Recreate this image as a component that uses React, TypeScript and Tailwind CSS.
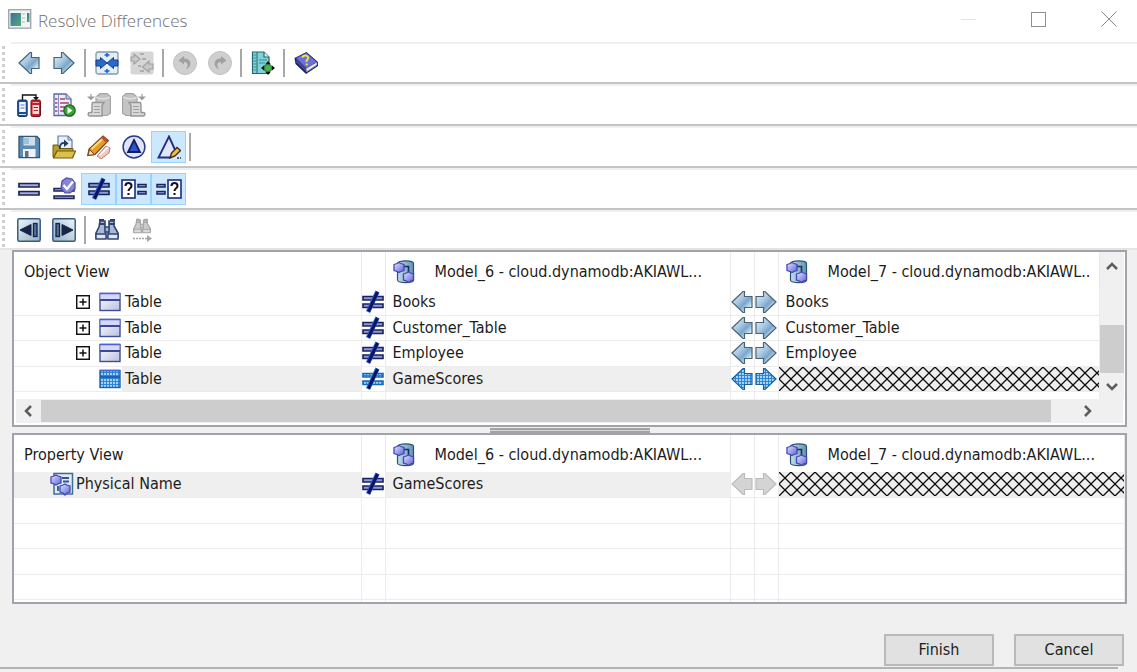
import React, { type ReactNode } from "react";

function Defs() {
  return (
    <svg className="absolute h-0 w-0" aria-hidden="true">
      <defs>
        <linearGradient id="arrow" x1="0" y1="0" x2="1" y2="1">
          <stop offset="0" stopColor="#e6f2fb" />
          <stop offset="0.4" stopColor="#a9c8e2" />
          <stop offset="0.6" stopColor="#7ba6cc" />
          <stop offset="0.8" stopColor="#c3e6f2" />
          <stop offset="1" stopColor="#e2f8fb" />
        </linearGradient>
        <linearGradient id="card" x1="0" y1="0" x2="1" y2="1">
          <stop offset="0" stopColor="#ffffff" />
          <stop offset="1" stopColor="#b9bfde" />
        </linearGradient>
        <linearGradient id="steel" x1="0" y1="0" x2="1" y2="1">
          <stop offset="0" stopColor="#eef6fa" />
          <stop offset="1" stopColor="#8fb0c6" />
        </linearGradient>
        <linearGradient id="cyl" x1="0" y1="0" x2="1" y2="0">
          <stop offset="0" stopColor="#c3dfec" />
          <stop offset="1" stopColor="#5d93b5" />
        </linearGradient>
        <linearGradient id="cube" x1="0" y1="0" x2="1" y2="1">
          <stop offset="0" stopColor="#e3e5ff" />
          <stop offset="1" stopColor="#5c60d6" />
        </linearGradient>
        <linearGradient id="app" x1="0" y1="0" x2="1" y2="1">
          <stop offset="0" stopColor="#3a6ea0" />
          <stop offset="1" stopColor="#4fae74" />
        </linearGradient>
        <pattern id="stipple" width="3" height="3" patternUnits="userSpaceOnUse">
          <rect width="3" height="3" fill="#2b86d6" />
          <rect width="2" height="2" fill="#a9d3f3" />
        </pattern>
        <pattern id="hatch" width="12" height="12" patternUnits="userSpaceOnUse">
          <path d="M-1 -1L13 13M13 -1L-1 13" stroke="#0c0c0c" strokeWidth="1.3" />
        </pattern>
      </defs>
    </svg>
  );
}

function Svg({ children }: { children: ReactNode }) {
  return (
    <svg viewBox="0 0 24 24" className="block h-6 w-6 shrink-0" fill="none" aria-hidden="true">
      {children}
    </svg>
  );
}

type Tone = "normal" | "selected" | "disabled";
const arrowFill = { normal: "url(#arrow)", selected: "url(#stipple)", disabled: "#d4d4d4" };
const arrowLine = { normal: "#4a6272", selected: "#1c5f9e", disabled: "#bcbcbc" };

function LeftArrow({ tone = "normal" }: { tone?: Tone }) {
  return (
    <Svg>
      <path d="M2 12L13 1.500H14.500V6.500H22V17.500H14.500V22.500H13Z" fill={arrowFill[tone]} stroke={arrowLine[tone]} strokeWidth="1.200" />
    </Svg>
  );
}

function RightArrow({ tone = "normal" }: { tone?: Tone }) {
  return (
    <Svg>
      <path d="M22 12L11 1.500H9.500V6.500H2V17.500H9.500V22.500H11Z" fill={arrowFill[tone]} stroke={arrowLine[tone]} strokeWidth="1.200" />
    </Svg>
  );
}

function NotEqual({ selected = false }: { selected?: boolean }) {
  const bar = selected ? "url(#stipple)" : "#8f9bd0";
  return (
    <Svg>
      <path d="M2 6.500H22V10H2ZM2 14H22V17.500H2Z" fill={bar} stroke={selected ? "#1769b8" : "#1a2163"} strokeWidth="1.600" />
      <path d="M16.500 1.500L7 22" stroke={selected ? "#1a7ad6" : "#2c62d8"} strokeWidth="4.500" />
      <path d="M16.500 2L7.500 21.500" stroke="#0d1461" strokeWidth="3" />
    </Svg>
  );
}

function Merge() {
  return (
    <Svg>
      <rect x="1" y="1" width="22" height="22" rx="2" fill="#e2edf4" stroke="#7e9ab0" strokeWidth="1.300" />
      <path d="M12 2V6M12 18V22M9.500 4H14.500M9.500 20H14.500" stroke="#2159e6" strokeWidth="1.600" />
      <path d="M1 9H5.500V6.500L12 12L5.500 17.500V15H1ZM23 9H18.500V6.500L12 12L18.500 17.500V15H23Z" fill="#2869c9" stroke="#173e8c" />
    </Svg>
  );
}

function MergeOff() {
  return (
    <Svg>
      <rect x="0.500" y="0.500" width="23" height="23" rx="2" fill="#d6d6d6" />
      <path d="M1 6H4V3L10 8L4 13V10H1ZM23 13H19V10L12.500 16L19 21V18H23Z" fill="#c9c9c9" stroke="#a2a2a2" strokeWidth="1.200" />
      <path d="M10 3H14M12 8H16M8 15H11M10 20H14" stroke="#a2a2a2" strokeWidth="1.400" />
    </Svg>
  );
}

function Undo() {
  return (
    <Svg>
      <circle cx="12" cy="12" r="11.500" fill="#cfcfcf" stroke="#c2c2c2" />
      <path d="M11 5L5.500 9.500L11 13.500V11C15 11 16 14.500 12.500 18.500C19.500 16 19 7.500 11 7.500Z" fill="#a0a0a0" />
    </Svg>
  );
}

function Redo() {
  return (
    <Svg>
      <circle cx="12" cy="12" r="11.500" fill="#cfcfcf" stroke="#c2c2c2" />
      <path d="M13 5L18.500 9.500L13 13.500V11C9 11 8 14.500 11.500 18.500C4.500 16 5 7.500 13 7.500Z" fill="#a0a0a0" />
    </Svg>
  );
}

function DocMove() {
  return (
    <Svg>
      <path d="M1.500 1H13L18 6V22.500H1.500Z" fill="#7fd3d6" stroke="#27666d" strokeWidth="1.200" />
      <path d="M13 1V6H18" fill="#d8f5f5" stroke="#27666d" strokeWidth="1.200" />
      <path d="M6 1V22" stroke="#27666d" />
      <path d="M2.500 4H5M2.500 7H5M2.500 10H5M2.500 13H5M2.500 16H5M2.500 19H5M8 9H16M8 12H14" stroke="#3c8b91" />
      <path d="M17 10L20 13.500H14ZM17 24L20 20.500H14ZM10 17L13.500 14V20ZM24 17L20.500 14V20Z" fill="#111" />
      <circle cx="17" cy="17" r="3.500" fill="#49b649" stroke="#1b6b25" strokeWidth="0.700" />
    </Svg>
  );
}

function HelpBook() {
  return (
    <Svg>
      <path d="M0.500 7L12.500 1L24 11V15L12 23L1.500 13Z" fill="#20245c" />
      <path d="M12 17.500L23 11V14L12.500 21Z" fill="#e9e9e9" stroke="#6f7394" strokeWidth="0.700" />
      <path d="M2 7L12.500 2L22.500 11L12 17Z" fill="#6b70da" />
      <path d="M2 8L12 17.500V20.500L2.500 11.500Z" fill="#454aa9" />
      <path d="M8 6.500C10 3 15 4.500 14 7.500C13.500 9 12 9 12.500 11M12.800 12.500V14.300" stroke="#f4e52e" strokeWidth="1.900" />
    </Svg>
  );
}

function CompareDb() {
  return (
    <Svg>
      <path d="M5.500 7V2H19V5" stroke="#151515" strokeWidth="1.400" />
      <path d="M16 4H22L19 7.500Z" fill="#151515" />
      <rect x="0.700" y="7" width="9.500" height="16.500" rx="1.500" fill="#1c4f98" stroke="#173b74" />
      <rect x="2.200" y="9" width="6.500" height="10" fill="#f5f8ff" />
      <path d="M3.500 12H7.500M3.500 15H7.500" stroke="#5579b4" />
      <path d="M2 21.500H9" stroke="#d5e2f7" />
      <rect x="14" y="7" width="9.500" height="16.500" rx="1.500" fill="#c6202a" stroke="#7d0d16" />
      <path d="M15.500 9.500H22" stroke="#f0a4a8" />
      <rect x="15.500" y="12" width="6.500" height="9" fill="#f7dada" />
      <path d="M16.500 14.500H21M16.500 17.500H21" stroke="#b2242d" />
    </Svg>
  );
}

function Report() {
  return (
    <Svg>
      <path d="M2 1H14L19 6V22.500H2Z" fill="#ebecfb" stroke="#5b66a8" strokeWidth="1.300" />
      <path d="M14 1V6H19" fill="#bcc4ee" stroke="#5b66a8" />
      <path d="M3 6H5.500M3 10H5.500M3 14H5.500M3 18H5.500M8 6H13M8 10H17M8 14H13M8 18H12" stroke="#a8416b" strokeWidth="1.700" />
      <path d="M6.500 2V22" stroke="#8791c9" />
      <circle cx="17.500" cy="17.500" r="5.700" fill="#35a52c" stroke="#1b651c" strokeWidth="1.200" />
      <path d="M15.500 14L20.500 17.500L15.500 21Z" fill="#fff" />
    </Svg>
  );
}

function ImportOff({ flip = false }: { flip?: boolean }) {
  return (
    <Svg>
      <g transform={flip ? "matrix(-1 0 0 1 24 0)" : undefined}>
        <path d="M9 4L13 0.700H20L23.500 3.500V20L20 22.500H9Z" fill="#c4c4c4" stroke="#a3a3a3" strokeWidth="1.200" />
        <path d="M9 4C12 6.500 19 6.500 23 4" stroke="#e3e3e3" strokeWidth="1.400" />
        <path d="M5.500 9.500H17L15 12.500V23H3C0.500 23 0.500 19.500 3 19.500H5V12Z" fill="#d9d9d9" stroke="#979797" strokeWidth="1.400" />
        <path d="M7 13.500H13M7 16.500H13M7 19.500H13" stroke="#a0a0a0" strokeWidth="1.200" />
        <path d="M4 1V5.500M1.500 4L4 6.500L6.500 4Z" stroke="#9b9b9b" fill="#9b9b9b" strokeWidth="1.200" />
      </g>
    </Svg>
  );
}

function Save() {
  return (
    <Svg>
      <path d="M2 1.500H20L22.500 4V22.500H2Z" fill="#5d8db6" stroke="#34566f" strokeWidth="1.300" />
      <rect x="6.500" y="2" width="11.500" height="8.500" fill="#cddfeb" />
      <path d="M7 3H12V9H7Z" fill="#a2c0d8" />
      <rect x="6" y="14" width="12.500" height="8" fill="#eff3f7" />
      <rect x="8" y="16" width="3.500" height="6" fill="#58748d" />
    </Svg>
  );
}

function Open() {
  return (
    <Svg>
      <path d="M6 1H16L20 5V18H6Z" fill="#e7f0fa" stroke="#5f7fa7" strokeWidth="1.200" />
      <path d="M16 1V5H20" stroke="#5f7fa7" />
      <path d="M1 10H6L8 13.500H21V22H1Z" fill="#b99b25" stroke="#6d5a10" />
      <path d="M5 16H23.500L20.500 23H1.500Z" fill="#dcc04a" stroke="#6d5a10" strokeWidth="1.200" />
      <path d="M8 14C7 9.500 10 7.500 13 8" stroke="#28394f" strokeWidth="1.800" />
      <path d="M12 4.500L16.500 8.500L12 12Z" fill="#28394f" />
    </Svg>
  );
}

function Pencil() {
  return (
    <Svg>
      <path d="M10 21L19 11L23 13L22 18L14 24Z" fill="#f1c9bd" stroke="#b97b6e" />
      <path d="M13 20L21 12" stroke="#fff" strokeWidth="1.500" />
      <path d="M0.700 20.500L2 14L16 1L21.500 5.500L8 19.500Z" fill="#e49b23" stroke="#7c4713" strokeWidth="1.200" />
      <path d="M4.500 14L16 3.500" stroke="#f9d77b" strokeWidth="2.200" />
      <path d="M2.500 14.500L7.500 19.500L1 20.500Z" fill="#f5dfb8" stroke="#7c4713" />
      <path d="M14 3L16 1L21.500 5.500L19.500 8Z" fill="#b85030" />
    </Svg>
  );
}

function Delta() {
  return (
    <Svg>
      <circle cx="12" cy="12" r="10.900" fill="#dfe4fa" stroke="#2a3d8a" strokeWidth="1.500" />
      <path d="M12 5L18 17H6Z" fill="#2c55d6" stroke="#131d59" strokeWidth="1.800" />
    </Svg>
  );
}

function EditDelta() {
  return (
    <Svg>
      <path d="M12 1.500L21.500 23H1.500Z" fill="#e2e6fb" />
      <path d="M19 17L12 1.500L1.500 22.500H13" stroke="#252e83" strokeWidth="1.900" />
      <path d="M13 23L14.500 18L20 12.500L23.500 15.500L18 21Z" fill="#eebc42" stroke="#3b2c15" strokeWidth="1.400" />
      <path d="M20 23H24" stroke="#333" strokeWidth="1.500" strokeDasharray="2 1" />
    </Svg>
  );
}

function Equal() {
  return (
    <Svg>
      <path d="M2 6.500H22V10H2ZM2 14.500H22V18H2Z" fill="#a4add7" stroke="#1b235f" strokeWidth="1.700" />
    </Svg>
  );
}

function EqualCheck() {
  return (
    <Svg>
      <path d="M2 11.500H22V14H2ZM2 19H22V21.500H2Z" fill="#a4add7" stroke="#1b235f" strokeWidth="1.500" />
      <path d="M10 4L14.500 1L20 2L23 6V12L18 16H13L9 11Z" fill="#8585d8" stroke="#4b4a9d" strokeWidth="1.200" />
      <path d="M11.500 8L15 12L21 4.500" stroke="#fff" strokeWidth="2.300" />
    </Svg>
  );
}

function QuestionEqual({ flip = false }: { flip?: boolean }) {
  return (
    <svg viewBox="0 0 26 24" className="h-6 w-[26px] shrink-0" fill="none" aria-hidden="true">
      <rect x={flip ? 12 : 1} y="3" width="13" height="18" fill="#fff" stroke="#27368a" strokeWidth="1.700" />
      <g transform={flip ? "translate(11 0)" : undefined}>
        <path d="M4.500 9C4.500 5 10.500 5 10.500 9C10.500 11.500 7.500 11 7.500 14M7.500 16V18" stroke="#161616" strokeWidth="2.100" />
      </g>
      <path d={flip ? "M1 7.500H9V10H1ZM1 14.500H9V17H1Z" : "M17 7.500H25V10H17ZM17 14.500H25V17H17Z"} fill="#a4add7" stroke="#1b235f" strokeWidth="1.500" />
    </svg>
  );
}

function Prev({ flip = false }: { flip?: boolean }) {
  return (
    <Svg>
      <g transform={flip ? "matrix(-1 0 0 1 24 0)" : undefined}>
        <rect x="0.800" y="0.800" width="22.400" height="22.400" rx="1.500" fill="url(#steel)" stroke="#3f5a80" strokeWidth="1.500" />
        <path d="M3 12L14 6.500V17.500Z" fill="#182347" stroke="#182347" />
        <rect x="16.500" y="5.500" width="3.500" height="13" fill="#55709a" stroke="#182347" strokeWidth="1.300" />
      </g>
    </Svg>
  );
}

function Find({ disabled = false }: { disabled?: boolean }) {
  const line = disabled ? "#a6a6a6" : "#33446c";
  const body = disabled ? "#cdcdcd" : "#a7b9db";
  return (
    <Svg>
      <g transform={disabled ? "translate(3 0) scale(0.75 0.7)" : undefined}>
        <path d="M5 3H10V8L11 20H1V15L4 9ZM14 3H19V8L23 15V20H13L14 8Z" fill={body} stroke={line} strokeWidth="1.600" />
        <path d="M10 9H14V14H10Z" fill={body} stroke={line} strokeWidth="1.400" />
        <path d="M4 2H9M15 2H20M4 6H10M14 6H20" stroke={line} strokeWidth="2" />
        <path d="M1 16H11V21H1ZM13 16H23V21H13Z" fill={disabled ? "#dadada" : "#dde6f5"} stroke={line} strokeWidth="1.400" />
      </g>
      {disabled && (
        <>
          <path d="M3 20.500H17" stroke="#a6a6a6" strokeWidth="1.400" strokeDasharray="2 1" />
          <path d="M17 17L22 20.500L17 24Z" fill="#a6a6a6" />
        </>
      )}
    </Svg>
  );
}

function ModelIcon() {
  return (
    <Svg>
      <path d="M4.500 3.500C4.500 0 20.500 0 20.500 3.500V20C20.500 23.500 4.500 23.500 4.500 20Z" fill="url(#cyl)" stroke="#28516b" strokeWidth="1.200" />
      <path d="M11 6.500H15.500V12" stroke="#1f2b60" strokeWidth="1.600" />
      <path d="M1 4.500L4 3.500L6 2.500L8 3.500L11 4.500V10.500L8 11.500L6 12.500L4 11.500L1 10.500Z" fill="url(#cube)" stroke="#4347b4" strokeWidth="1.300" />
      <path d="M10.500 14L13.500 13L15.500 12L17.500 13L20.500 14V20L17.500 21L15.500 22.500L13.500 21L10.500 20Z" fill="url(#cube)" stroke="#4347b4" strokeWidth="1.300" />
    </Svg>
  );
}

function PropertyIcon() {
  return (
    <Svg>
      <rect x="4" y="1.500" width="18.500" height="20.500" fill="#dfeaf3" stroke="#416d95" strokeWidth="1.500" />
      <path d="M12 6H19M13 9.500H19M8 14V19M18 13V19" stroke="#34558b" strokeWidth="1.800" />
      <path d="M1 5L4 4L6 3L8 4L11 5V11L8 12L6 13L4 12L1 11Z" fill="url(#cube)" stroke="#4347b4" strokeWidth="1.300" />
      <path d="M10 14L13 13L15 12L17 13L20 14V20L17 21L15 23L13 21L10 20Z" fill="url(#cube)" stroke="#4347b4" strokeWidth="1.300" />
    </Svg>
  );
}

function TableIcon({ selected = false }: { selected?: boolean }) {
  return (
    <Svg>
      <rect x="2" y="3.500" width="20" height="17" fill={selected ? "url(#stipple)" : "url(#card)"} stroke={selected ? "#1b62b0" : "#3c4c9c"} strokeWidth="1.400" />
      {!selected && <rect x="2.500" y="4" width="19" height="5" fill="#d5d9f7" />}
      <path d="M2 10H22" stroke={selected ? "#1d62b4" : "#3a4899"} strokeWidth="2" />
      <path d="M2 3.500H22" stroke="#4a62d4" strokeWidth="1.500" />
    </Svg>
  );
}

function Tool({ label, pressed, disabled, children }: { label: string; pressed?: boolean; disabled?: boolean; children: ReactNode }) {
  return (
    <button
      type="button"
      aria-label={label}
      aria-pressed={pressed}
      disabled={disabled}
      className={
        "flex h-8 w-[35px] items-center justify-center border " +
        (pressed ? "border-[#99d1ff] bg-[#cce8ff]" : "border-transparent")
      }
    >
      {children}
    </button>
  );
}

function Sep() {
  return <span className="mx-[3px] h-7 w-[2px] bg-[#a8a8a8]" />;
}

function Bar({ label, last = false, children }: { label: string; last?: boolean; children: ReactNode }) {
  return (
    <div
      role="toolbar"
      aria-label={label}
      className={"flex pl-[2px] " + (last ? "h-10 border-b-2 border-[#e4e4e4]" : "h-[42px] border-b-2 border-[#c3c4c7]")}
    >
      <div className="mt-1 w-[3px] bg-[repeating-linear-gradient(to_bottom,#cfcfcf_0_3px,#ffffff_3px_6px)]" />
      <div className="ml-[6px] flex flex-1 items-center border-t-2 border-[#f0f0f0]">{children}</div>
    </div>
  );
}

const line = "border-r border-[#e9e9e9]";

function ModelHead({ name }: { name: string }) {
  return (
    <th scope="col" className={"overflow-hidden p-0 font-normal " + line}>
      <div className="flex items-center pt-[2px] pl-[7px]">
        <ModelIcon />
        <span className="ml-[18px] min-w-0 whitespace-nowrap">{name}</span>
      </div>
    </th>
  );
}

function Grid({ title, last, children }: { title: string; last: string; children: ReactNode }) {
  return (
    <table className="w-full table-fixed border-collapse text-left">
      <colgroup>
        <col className="w-[347px]" />
        <col className="w-6" />
        <col className="w-[345px]" />
        <col className="w-6" />
        <col className="w-6" />
        <col />
      </colgroup>
      <thead>
        <tr className="h-[37px]">
          <th scope="col" className={"p-0 pt-[2px] pl-[10px] font-normal " + line}>{title}</th>
          <td className={line} />
          <ModelHead name="Model_6 - cloud.dynamodb:AKIAWL..." />
          <td className={line} />
          <td className={line} />
          <ModelHead name={last} />
        </tr>
      </thead>
      <tbody>{children}</tbody>
    </table>
  );
}

interface RowProps {
  first?: ReactNode;
  left?: string;
  right?: string;
  tall?: boolean;
  selected?: boolean;
  stipple?: boolean;
  hatch?: boolean;
  tone?: Tone;
}

function Row({ first, left, right, tall, selected, stipple, hatch, tone = "normal" }: RowProps) {
  const base = "p-0 border-b border-r border-[#ececec] ";
  const cell = base + "overflow-hidden ";
  const height = tall ? "h-[26px]" : "h-[25px]";
  const shade = selected ? "bg-[#efefef]" : "";
  return (
    <tr className={height}>
      <td className={cell + shade}>
        <div className="flex h-6 items-center">{first}</div>
      </td>
      <td className={base}>{left && <div className="-ml-px"><NotEqual selected={stipple} /></div>}</td>
      <td className={cell + shade}>
        <div className="h-6 pl-[7px] leading-6">{left}</div>
      </td>
      <td className={base}>
        {left && (
          <button type="button" aria-label={"Copy " + left + " left"} className="-ml-px block" disabled={tone === "disabled"}>
            <LeftArrow tone={tone} />
          </button>
        )}
      </td>
      <td className={base}>
        {left && (
          <button type="button" aria-label={"Copy " + left + " right"} className="-ml-px block" disabled={tone === "disabled"}>
            <RightArrow tone={tone} />
          </button>
        )}
      </td>
      <td className={cell + shade}>
        {hatch ? (
          <svg className="block h-6 w-full" aria-hidden="true">
            <rect width="100%" height="100%" fill="url(#hatch)" />
          </svg>
        ) : (
          <div className="h-6 pl-[7px] leading-6">{right}</div>
        )}
      </td>
    </tr>
  );
}

function TableNode({ selected = false }: { selected?: boolean }) {
  return (
    <div className={"flex h-6 items-center " + (selected ? "bg-white" : "")}>
      <span className="flex w-[84px] justify-end pr-2">
        {!selected && (
          <button type="button" aria-label="Expand" className="block">
            <svg viewBox="0 0 14 14" className="h-[14px] w-[14px]" fill="none" stroke="#111" strokeWidth="1.500">
              <rect x="0.700" y="0.700" width="12.600" height="12.600" />
              <path d="M3.500 7H10.500M7 3.500V10.500" />
            </svg>
          </button>
        )}
      </span>
      <TableIcon selected={selected} />
    </div>
  );
}

function Chevron({ label, d, className }: { label: string; d: string; className: string }) {
  return (
    <button type="button" aria-label={label} className={"flex items-center justify-center " + className}>
      <svg viewBox="0 0 12 12" className="h-3 w-3" fill="none" stroke="#5c5c5c" strokeWidth="2.500" aria-hidden="true">
        <path d={d} />
      </svg>
    </button>
  );
}

const books = ["Books", "Customer_Table", "Employee"];

export default function App() {
  return (
    <div className="flex min-h-screen flex-col bg-[#f0f0f0] font-['DejaVu_Sans_Condensed','DejaVu_Sans',sans-serif] text-base leading-6 text-[#1c1c1c]">
      <Defs />
      <header className="flex h-[42px] items-center bg-white pl-2">
        <svg viewBox="0 0 24 20" className="mb-1 h-5 w-6" aria-hidden="true">
          <rect x="0.700" y="0.700" width="22" height="18.500" fill="#f2f3f4" stroke="#a2a8ad" strokeWidth="1.400" />
          <rect x="2.500" y="4" width="10.500" height="13" fill="url(#app)" />
          <path d="M14 5H17M14 9H17M14 13H17" stroke="#d4d6d8" strokeWidth="2" />
          <rect x="19" y="4" width="2.500" height="9" fill="url(#app)" />
        </svg>
        <h1 className="ml-[6px] flex-1 font-['Open_Sans',sans-serif] text-[17px] font-light text-[#707070]">Resolve Differences</h1>
        <div className="flex self-start pt-[7px]">
          <button type="button" aria-label="Minimize" className="flex h-6 w-[70px] items-center justify-center">
            <span className="h-px w-[15px] bg-[#e4e4e4]" />
          </button>
          <button type="button" aria-label="Maximize" className="flex h-6 w-[70px] items-center justify-center">
            <span className="h-[15px] w-[15px] border border-[#8f8f8f]" />
          </button>
          <button type="button" aria-label="Close" className="mr-[-7px] flex h-6 w-[71px] items-center justify-center">
            <svg viewBox="0 0 16 16" className="h-4 w-4" stroke="#8a8a8a" aria-hidden="true">
              <path d="M0.500 0.500L15.500 15.500M15.500 0.500L0.500 15.500" />
            </svg>
          </button>
        </div>
      </header>

      <div className="bg-white">
        <Bar label="Navigation">
          <Tool label="Back"><LeftArrow /></Tool>
          <Tool label="Forward"><RightArrow /></Tool>
          <Sep />
          <Tool label="Match"><Merge /></Tool>
          <Tool label="Unmatch" disabled><MergeOff /></Tool>
          <Sep />
          <Tool label="Undo" disabled><Undo /></Tool>
          <Tool label="Redo" disabled><Redo /></Tool>
          <Sep />
          <Tool label="Options"><DocMove /></Tool>
          <Sep />
          <Tool label="Help"><HelpBook /></Tool>
        </Bar>
        <Bar label="Compare">
          <Tool label="Compare"><CompareDb /></Tool>
          <Tool label="Report"><Report /></Tool>
          <Tool label="Import left" disabled><ImportOff /></Tool>
          <Tool label="Import right" disabled><ImportOff flip /></Tool>
        </Bar>
        <Bar label="File">
          <Tool label="Save"><Save /></Tool>
          <Tool label="Open"><Open /></Tool>
          <Tool label="Clear"><Pencil /></Tool>
          <Tool label="Show changes"><Delta /></Tool>
          <Tool label="Edit changes" pressed><EditDelta /></Tool>
          <Sep />
        </Bar>
        <Bar label="Filters">
          <Tool label="Equal"><Equal /></Tool>
          <Tool label="Accepted equal"><EqualCheck /></Tool>
          <Tool label="Not equal" pressed><NotEqual /></Tool>
          <Tool label="Missing left" pressed><QuestionEqual /></Tool>
          <Tool label="Missing right" pressed><QuestionEqual flip /></Tool>
        </Bar>
        <Bar label="Search" last>
          <Tool label="Previous difference"><Prev /></Tool>
          <Tool label="Next difference"><Prev flip /></Tool>
          <Sep />
          <Tool label="Find"><Find /></Tool>
          <Tool label="Find next" disabled><Find disabled /></Tool>
        </Bar>
      </div>

      <main className="pr-[10px] pl-3">
        <section className="border-2 border-[#a0a3a9] bg-white">
          <div className="flex">
            <div className="h-[147px] min-w-0 flex-1 overflow-hidden">
              <Grid title="Object View" last="Model_7 - cloud.dynamodb:AKIAWL..">
                {books.map((name, i) => (
                  <Row
                    key={name}
                    tall={i % 2 === 0}
                    left={name}
                    right={name}
                    first={<><TableNode /><span className="ml-[3px]">Table</span></>}
                  />
                ))}
                <Row
                  left="GameScores"
                  selected
                  stipple
                  hatch
                  tone="selected"
                  first={<><TableNode selected /><span className="ml-[3px]">Table</span></>}
                />
                <Row />
              </Grid>
            </div>
            <div className="mr-px flex w-6 flex-col bg-[#f0f0f0]">
              <Chevron label="Scroll up" d="M1 8L6 3L11 8" className="h-[30px] w-6" />
              <div className="flex-1" />
              <div className="h-12 bg-[#cdcdcd]" />
              <Chevron label="Scroll down" d="M1 4L6 9L11 4" className="h-[26px] w-6" />
            </div>
          </div>
          <div className="mx-[2px] mb-[2px] flex h-6 bg-[#f0f0f0]">
            <Chevron label="Scroll left" d="M8 1L3 6L8 11" className="h-6 w-[25px]" />
            <div className="h-[22px] flex-1 self-center bg-[#cdcdcd]" />
            <div className="w-6" />
            <Chevron label="Scroll right" d="M4 1L9 6L4 11" className="mr-6 h-6 w-6" />
          </div>
        </section>

        <div className="flex h-[6px] items-center justify-center">
          <div className="h-[5px] w-40 border-y-2 border-[#a3a3a3] bg-[#d6d6d6]" />
        </div>

        <section className="border-2 border-[#a0a3a9] bg-white">
          <div className="h-[167px] overflow-hidden">
            <Grid title="Property View" last="Model_7 - cloud.dynamodb:AKIAWL...">
              <Row
                left="GameScores"
                selected
                hatch
                tone="disabled"
                first={<><span className="w-9" /><PropertyIcon /><span className="ml-[2px]">Physical Name</span></>}
              />
              <Row tall />
              <Row />
              <Row tall />
              <Row />
              <Row />
            </Grid>
          </div>
        </section>
      </main>

      <footer className="mr-[19px] mt-auto mb-[3px] border-b-2 border-[#b3b3b3] pb-[1px]">
        <div className="mr-[-6px] flex justify-end gap-5">
          <button type="button" className="h-8 w-[110px] border-2 border-[#b9b9b9] bg-[#e1e1e1] leading-7">Finish</button>
          <button type="button" className="h-8 w-[110px] border-2 border-[#b9b9b9] bg-[#e1e1e1] leading-7">Cancel</button>
        </div>
      </footer>
    </div>
  );
}
